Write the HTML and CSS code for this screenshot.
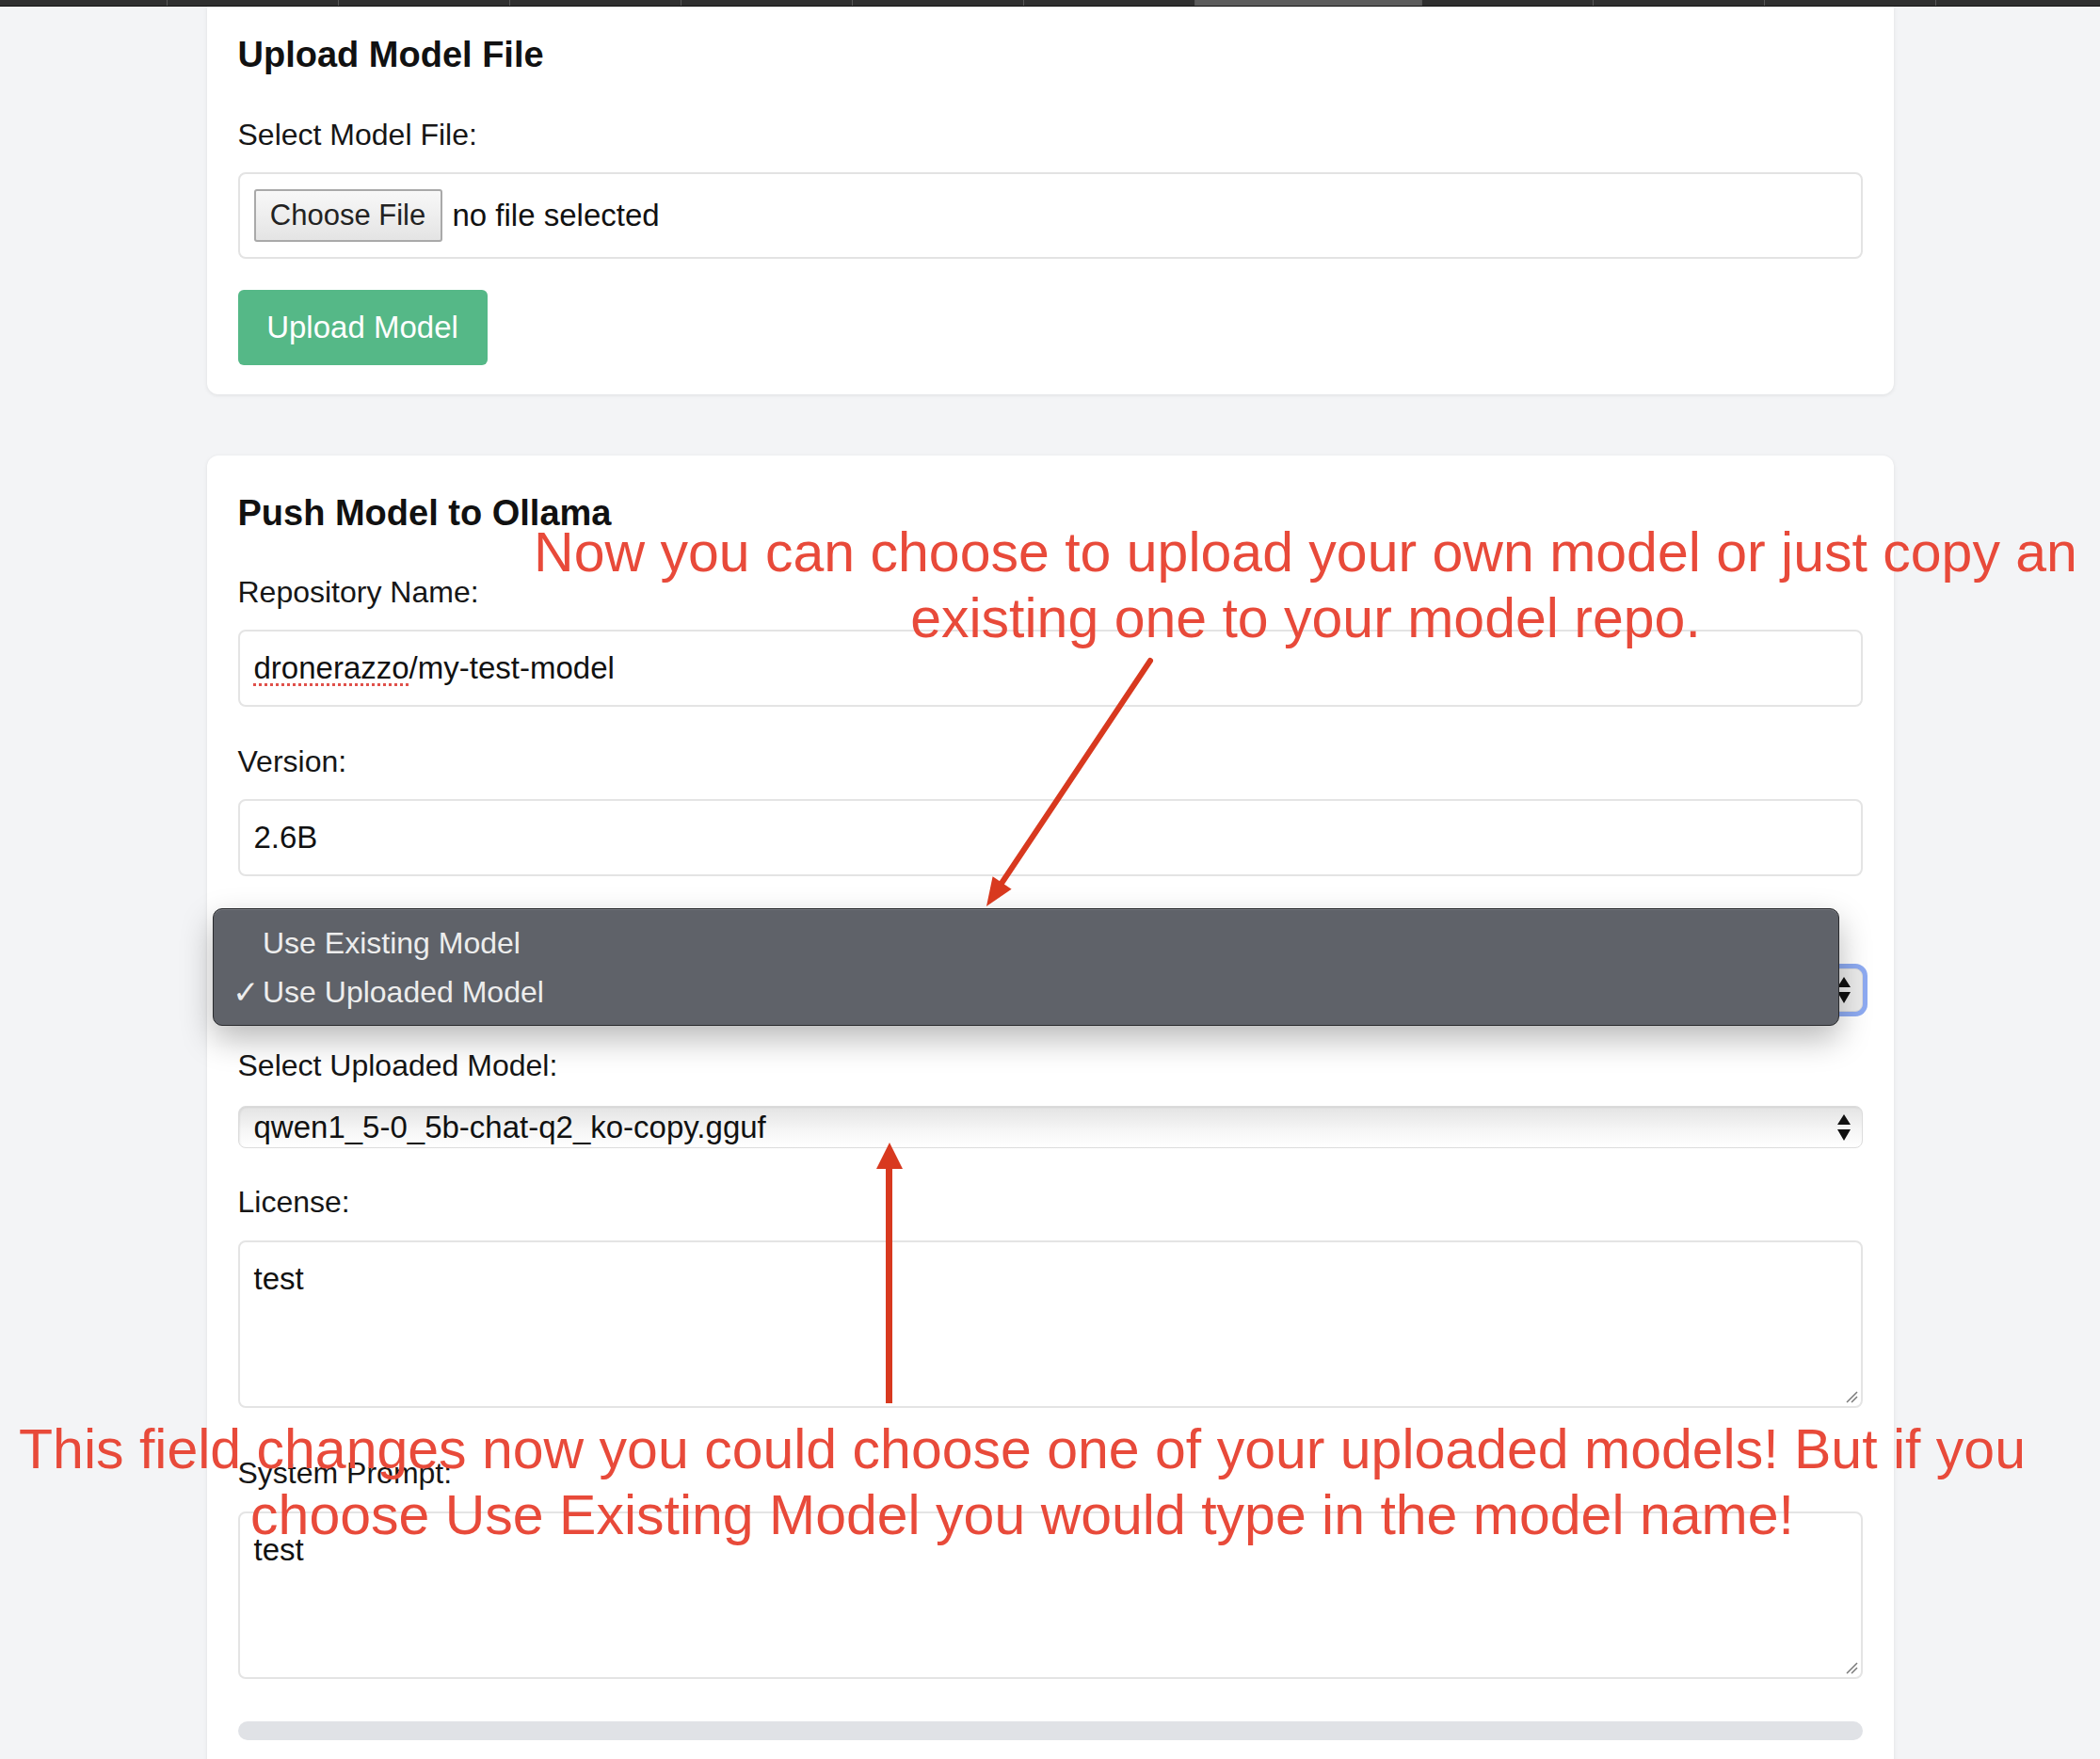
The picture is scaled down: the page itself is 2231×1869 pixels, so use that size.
FILE: index.html
```html
<!DOCTYPE html>
<html lang="en">
<head>
<meta charset="utf-8">
<title>Ollama Model Uploader</title>
<link rel="stylesheet" href="styles.css">
</head>
<body>
<div class="tabbar">
  <div class="tab tab-first"></div>
  <div class="tab"></div>
  <div class="tab"></div>
  <div class="tab"></div>
  <div class="tab"></div>
  <div class="tab"></div>
  <div class="tab"></div>
  <div class="tab tab-active"></div>
  <div class="tab"></div>
  <div class="tab"></div>
  <div class="tab"></div>
  <div class="tab tab-last"></div>
</div>

<main class="page">
  <section class="card card-first">
    <h2 class="card-title title-first">Upload Model File</h2>
    <div class="field field-file">
      <label class="label">Select Model File:</label>
      <div class="file-box">
        <span class="file-btn">Choose File</span>
        <span class="file-name">no file selected</span>
      </div>
    </div>
    <button class="btn-green">Upload Model</button>
  </section>

  <section class="card card-second">
    <h2 class="card-title">Push Model to Ollama</h2>
    <div class="field">
      <label class="label">Repository Name:</label>
      <div class="input"><span class="misspelled">dronerazzo</span>/my-test-model</div>
    </div>
    <div class="field">
      <label class="label">Version:</label>
      <div class="input">2.6B</div>
    </div>
    <div class="field field-source">
      <div class="label-space"></div>
      <div class="select select-focus">
        <span></span>
        <svg class="updown" width="14" height="28" viewBox="0 0 14 28"><path d="M7 0 L14 11 L0 11 Z M0 16 L14 16 L7 28 Z" fill="#111"/></svg>
      </div>
    </div>
    <div class="field field-upl">
      <label class="label">Select Uploaded Model:</label>
      <div class="select">
        <span>qwen1_5-0_5b-chat-q2_ko-copy.gguf</span>
        <svg class="updown" width="14" height="28" viewBox="0 0 14 28"><path d="M7 0 L14 11 L0 11 Z M0 16 L14 16 L7 28 Z" fill="#111"/></svg>
      </div>
    </div>
    <div class="field field-license">
      <label class="label">License:</label>
      <div class="textarea">test
        <svg class="grip" width="13" height="13" viewBox="0 0 13 13"><path d="M12 1 L1 12 M12 6 L6 12" stroke="#7a7a7a" stroke-width="1.5"/></svg>
      </div>
    </div>
    <div class="field field-last">
      <label class="label">System Prompt:</label>
      <div class="textarea">test
        <svg class="grip" width="13" height="13" viewBox="0 0 13 13"><path d="M12 1 L1 12 M12 6 L6 12" stroke="#7a7a7a" stroke-width="1.5"/></svg>
      </div>
    </div>
    <div class="progress"></div>
  </section>
</main>

<div class="dropdown">
  <div class="dd-item"><span class="dd-check"></span>Use Existing Model</div>
  <div class="dd-item"><span class="dd-check">✓</span>Use Uploaded Model</div>
</div>

<div class="note note-top">Now you can choose to upload your own model or just copy an<br>existing one to your model repo.</div>
<div class="note note-bottom">This field changes now you could choose one of your uploaded models! But if you<br>choose Use Existing Model you would type in the model name!</div>

<svg class="arrows" width="2231" height="1869" viewBox="0 0 2231 1869">
  <line x1="1222" y1="702" x2="1063" y2="940" stroke="#d8391f" stroke-width="6" stroke-linecap="round"/>
  <polygon points="1048,963 1054.6,931.3 1074.6,944.7" fill="#d8391f"/>
  <line x1="944.5" y1="1240" x2="944.5" y2="1491" stroke="#d8391f" stroke-width="7"/>
  <polygon points="945,1214 959,1242 931,1242" fill="#d8391f"/>
</svg>
</body>
</html>
```

FILE: styles.css
```css
* { box-sizing: border-box; }

html, body {
  margin: 0;
  padding: 0;
  overflow: hidden;
}

body {
  position: relative;
  background: #f3f4f6;
  font-family: "Liberation Sans", Arial, sans-serif;
  color: #111;
  min-height: 1869px;
}

/* browser tab strip */
.tabbar {
  display: flex;
  height: 7px;
  background: #303030;
  border-bottom: 1px solid #141414;
}
.tab {
  width: 182px;
  border-right: 1px solid #575757;
}
.tab-first { width: 178px; }
.tab-active { width: 241px; background: #5c5c5c; }
.tab-last { flex: 1; border-right: 0; }

.page {
  width: 1792px;
  margin: 0 auto;
}

.card {
  background: #fff;
  border-radius: 12px;
  box-shadow: 0 1px 4px rgba(0, 0, 0, 0.09);
  padding: 39px 33px 60px;
}
.card-first {
  border-radius: 0 0 12px 12px;
  padding-top: 29px;
  padding-bottom: 31px;
}
.card-second {
  margin-top: 65px;
  padding-bottom: 80px;
}

.card-title {
  margin: 0 0 43px;
  font-size: 38px;
  line-height: 44px;
  font-weight: 700;
  color: #111;
}
.title-first { margin-bottom: 44px; }

.field { margin-bottom: 39px; }
.field-file { margin-bottom: 33px; }
.field-source { margin-bottom: 38px; }
.field-upl { margin-bottom: 38px; }
.field-upl .label { margin-bottom: 24px; }
.field-license { margin-bottom: 50px; }
.field-license .label,
.field-last .label { margin-bottom: 22px; }
.field-last { margin-bottom: 45px; }

.label {
  display: block;
  font-size: 32px;
  line-height: 38px;
  margin-bottom: 21px;
  color: #161616;
}
.label-space {
  height: 38px;
  margin-bottom: 21px;
}

.file-box {
  height: 92px;
  border: 2px solid #e3e3e3;
  border-radius: 8px;
  padding: 0 15px;
  display: flex;
  align-items: center;
}
.file-btn {
  width: 200px;
  height: 56px;
  border: 2px solid #a9a9a9;
  border-radius: 3px;
  background: linear-gradient(#f8f8f8, #e4e4e4);
  font-size: 31px;
  line-height: 38px;
  color: #222;
  display: flex;
  align-items: center;
  justify-content: center;
}
.file-name {
  margin-left: 11px;
  font-size: 33px;
  line-height: 38px;
}

.btn-green {
  display: block;
  width: 265px;
  height: 80px;
  padding: 0;
  border: 0;
  border-radius: 6px;
  background: #55b887;
  color: #fff;
  font-family: "Liberation Sans", Arial, sans-serif;
  font-size: 33px;
}

.input {
  height: 82px;
  border: 2px solid #e4e4e4;
  border-radius: 8px;
  padding: 0 15px;
  display: flex;
  align-items: center;
  font-size: 33px;
  line-height: 38px;
}
.misspelled {
  text-decoration: underline dotted #e0504a;
  text-decoration-thickness: 3px;
  text-underline-offset: 5px;
}

.select {
  height: 45px;
  border: 1px solid #dcdcdc;
  border-radius: 8px;
  background: linear-gradient(#e3e3e3, #f5f5f5 55%, #fff);
  box-shadow: inset 1px 1px 2px rgba(0, 0, 0, 0.07);
  padding: 0 12px 0 16px;
  display: flex;
  align-items: center;
  justify-content: space-between;
  font-size: 33px;
  line-height: 38px;
}
.select-focus {
  height: 46px;
  background: #ececec;
  box-shadow: 0 0 0 5px #8eabf2;
}
.updown { flex: none; }

.textarea {
  position: relative;
  height: 178px;
  border: 2px solid #e4e4e4;
  border-radius: 8px;
  padding: 20px 15px;
  font-size: 33px;
  line-height: 38px;
}
.grip {
  position: absolute;
  right: 3px;
  bottom: 3px;
}

.progress {
  height: 20px;
  border-radius: 10px;
  background: #e0e2e6;
}

/* native popup menu overlay */
.dropdown {
  position: absolute;
  left: 226px;
  top: 965px;
  width: 1728px;
  height: 125px;
  padding: 10px 0 9px;
  background: #5f6269;
  border: 1px solid #2a2b2e;
  border-radius: 10px;
  box-shadow: 0 14px 34px rgba(0, 0, 0, 0.28), inset 0 1px 0 rgba(255, 255, 255, 0.14);
  color: #ededed;
}
.dd-item {
  display: flex;
  align-items: center;
  height: 52px;
  padding-left: 20px;
  font-size: 32px;
  line-height: 52px;
}
.dd-check {
  width: 32px;
  font-family: "DejaVu Sans", sans-serif;
  font-size: 34px;
  font-weight: 700;
}

/* red annotations */
.note {
  position: absolute;
  font-family: "Liberation Sans", Arial, sans-serif;
  font-size: 59px;
  line-height: 70px;
  color: #e84a3a;
  text-align: center;
  white-space: nowrap;
}
.note-top {
  left: 557px;
  top: 552px;
  width: 1660px;
}
.note-bottom {
  left: 8px;
  top: 1505px;
  width: 2156px;
}

.arrows {
  position: absolute;
  left: 0;
  top: 0;
  pointer-events: none;
}
```
